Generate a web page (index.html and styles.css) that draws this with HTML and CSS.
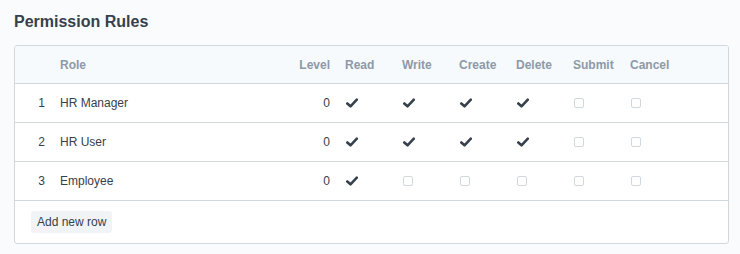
FILE: index.html
```html
<!DOCTYPE html>
<html lang="en">
<head>
<meta charset="utf-8">
<title>Permission Rules</title>
<link rel="stylesheet" href="styles.css">
</head>
<body>
<h3 class="section-title">Permission Rules</h3>
<div class="grid-card">
  <div class="grid-row grid-head">
    <div class="cell idx"></div>
    <div class="cell">Role</div>
    <div class="cell num">Level</div>
    <div class="cell">Read</div>
    <div class="cell">Write</div>
    <div class="cell">Create</div>
    <div class="cell">Delete</div>
    <div class="cell">Submit</div>
    <div class="cell">Cancel</div>
    <div class="cell"></div>
  </div>

  <div class="grid-row">
    <div class="cell idx">1</div>
    <div class="cell">HR Manager</div>
    <div class="cell num">0</div>
    <div class="cell"><svg class="tick" viewBox="0 0 12 10"><path d="M1.3 5.5 L4.5 8.3 L10.8 1.7"/></svg></div>
    <div class="cell"><svg class="tick" viewBox="0 0 12 10"><path d="M1.3 5.5 L4.5 8.3 L10.8 1.7"/></svg></div>
    <div class="cell"><svg class="tick" viewBox="0 0 12 10"><path d="M1.3 5.5 L4.5 8.3 L10.8 1.7"/></svg></div>
    <div class="cell"><svg class="tick" viewBox="0 0 12 10"><path d="M1.3 5.5 L4.5 8.3 L10.8 1.7"/></svg></div>
    <div class="cell"><span class="box"></span></div>
    <div class="cell"><span class="box"></span></div>
    <div class="cell"></div>
  </div>

  <div class="grid-row">
    <div class="cell idx">2</div>
    <div class="cell">HR User</div>
    <div class="cell num">0</div>
    <div class="cell"><svg class="tick" viewBox="0 0 12 10"><path d="M1.3 5.5 L4.5 8.3 L10.8 1.7"/></svg></div>
    <div class="cell"><svg class="tick" viewBox="0 0 12 10"><path d="M1.3 5.5 L4.5 8.3 L10.8 1.7"/></svg></div>
    <div class="cell"><svg class="tick" viewBox="0 0 12 10"><path d="M1.3 5.5 L4.5 8.3 L10.8 1.7"/></svg></div>
    <div class="cell"><svg class="tick" viewBox="0 0 12 10"><path d="M1.3 5.5 L4.5 8.3 L10.8 1.7"/></svg></div>
    <div class="cell"><span class="box"></span></div>
    <div class="cell"><span class="box"></span></div>
    <div class="cell"></div>
  </div>

  <div class="grid-row">
    <div class="cell idx">3</div>
    <div class="cell">Employee</div>
    <div class="cell num">0</div>
    <div class="cell"><svg class="tick" viewBox="0 0 12 10"><path d="M1.3 5.5 L4.5 8.3 L10.8 1.7"/></svg></div>
    <div class="cell"><span class="box"></span></div>
    <div class="cell"><span class="box"></span></div>
    <div class="cell"><span class="box"></span></div>
    <div class="cell"><span class="box"></span></div>
    <div class="cell"><span class="box"></span></div>
    <div class="cell"></div>
  </div>

  <div class="grid-foot">
    <button class="btn-add" type="button">Add new row</button>
  </div>
</div>
</body>
</html>
```

FILE: styles.css
```css
html, body {
  margin: 0;
  background: #fafbfc;
}

body {
  padding: 0 11px 0 14px;
  font-family: "Liberation Sans", Arial, sans-serif;
  font-size: 12px;
  color: #36414c;
}

.section-title {
  margin: 0;
  padding-top: 12px;
  height: 45px;
  box-sizing: border-box;
  font-size: 16px;
  font-weight: bold;
  line-height: 19px;
  color: #36414c;
}

.grid-card {
  background: #fff;
  border: 1px solid #d1d8dd;
  border-radius: 3px;
  overflow: hidden;
}

.grid-row {
  display: grid;
  grid-template-columns: 45px 230px 55px repeat(6, 57px) 1fr;
  height: 39px;
  align-items: center;
  border-bottom: 1px solid #d1d8dd;
  box-sizing: border-box;
}

.grid-head {
  height: 38px;
  background: #f7fafc;
  color: #8d99a6;
  font-weight: bold;
}

.cell {
  display: flex;
  align-items: center;
  white-space: nowrap;
}

.idx {
  justify-content: flex-end;
  padding-right: 15px;
}

.num {
  justify-content: flex-end;
  padding-right: 15px;
}

.tick {
  width: 12px;
  height: 10px;
  margin-left: 1px;
  fill: none;
  stroke: #36414c;
  stroke-width: 2.6;
  stroke-linecap: round;
  stroke-linejoin: round;
}

.box {
  display: block;
  width: 8px;
  height: 8px;
  margin-left: 1px;
  border: 1px solid #d1d8dd;
  border-radius: 2px;
  background: #fff;
}

.grid-foot {
  height: 42px;
  display: flex;
  align-items: center;
  padding-left: 16px;
}

.btn-add {
  font-family: inherit;
  font-size: 12px;
  color: #36414c;
  background: #f0f4f7;
  border: none;
  border-radius: 3px;
  height: 22px;
  padding: 0 6px;
  margin-top: -1px;
}
```
